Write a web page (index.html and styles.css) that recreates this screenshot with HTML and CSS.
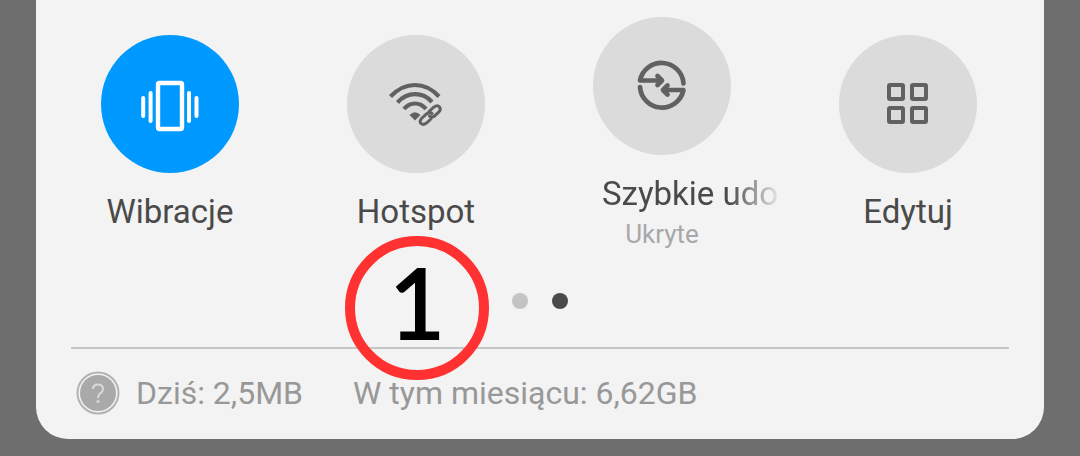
FILE: index.html
```html
<!DOCTYPE html>
<html lang="pl">
<head>
  <meta charset="UTF-8" />
  <meta name="viewport" content="width=device-width, initial-scale=1" />
  <title>Szybkie ustawienia</title>
  <link rel="stylesheet" href="styles.css">
</head>
<body>
  <main class="panel">
    <div class="tiles">
      <button type="button" class="tile active">
        <span class="circle">
          <svg width="64" height="64" viewBox="0 0 64 64" fill="none" stroke="currentColor" stroke-width="4" stroke-linecap="round">
            <rect x="20" y="11" width="24" height="46" rx="1.5" stroke-width="4.4" />
            <path d="M12.6 21v28M5.2 26v18M51 21v28M58.5 26v18" />
          </svg>
        </span>
        <span class="label">Wibracje</span>
      </button>

      <button type="button" class="tile">
        <span class="circle">
          <svg width="64" height="64" viewBox="0 0 64 64" fill="none" stroke="currentColor" stroke-width="4.2">
            <path d="M6.500 24.500Q17.500 13 31 13Q44.500 13 55 24.500M13.500 30.500Q21 22.200 31 22.200Q41 22.200 48 30M20 37Q24.500 31.500 31 31.500Q37.500 31.500 42 37" />
            <path d="M25.500 43Q31 37.500 36.500 43L31 48.500Z" fill="currentColor" stroke="none" />
            <g stroke-width="3" stroke-linecap="round">
              <path d="M45 39.500L50 35Q53.500 32.500 55.500 35Q57.500 37.500 54.500 40.500L50.500 44Q48 46 45.500 44" />
              <path d="M48 41.500Q45.500 39.500 42.500 42L37.500 46.500Q35 49.500 37 51.500Q39 53.500 42.500 51L47 47" />
            </g>
          </svg>
        </span>
        <span class="label">Hotspot</span>
      </button>

      <button type="button" class="tile">
        <span class="circle">
          <svg width="64" height="64" viewBox="0 0 64 64" fill="none" stroke="currentColor" stroke-width="4.700" stroke-linecap="round" stroke-linejoin="round">
            <path d="M53.500 29.500A22 22 0 0 0 10 26.500H31" />
            <path d="M10 33A22 22 0 0 0 53.500 36H34" />
            <path d="M27.500 22L32 26.500L27.500 31M37.500 31.500L33 36L37.500 40.500" fill="currentColor" />
          </svg>
        </span>
        <span class="label long">Szybkie udo</span>
        <span class="status">Ukryte</span>
      </button>

      <button type="button" class="tile">
        <span class="circle">
          <svg width="64" height="64" viewBox="0 0 64 64" fill="none" stroke="currentColor" stroke-width="4">
            <rect x="13" y="13" width="14" height="14" rx="1" />
            <rect x="36" y="13" width="14" height="14" rx="1" />
            <rect x="13" y="36" width="14" height="14" rx="1" />
            <rect x="36" y="36" width="14" height="14" rx="1" />
          </svg>
        </span>
        <span class="label">Edytuj</span>
      </button>
    </div>

    <div class="pager">
      <span class="dot"></span>
      <span class="dot current"></span>
      <span class="marker">1</span>
    </div>

    <div class="usage">
      <svg class="help" width="44" height="44" viewBox="0 0 44 44" fill="none">
        <circle cx="22" cy="22" r="20.500" stroke="#b3b3b3" stroke-width="2" />
        <circle cx="22" cy="22" r="18" fill="#a9a9a9" />
        <path d="M17 18Q17 13.500 22 13.500Q27 13.500 27 18Q27 20.500 24 22.500Q22 24 22 27" stroke="#d9d9d9" stroke-width="2" />
        <circle cx="22" cy="30.500" r="1.500" fill="#d9d9d9" />
      </svg>
      <span class="today">Dziś: 2,5MB</span>
      <span>W tym miesiącu: 6,62GB</span>
    </div>
  </main>
</body>
</html>
```

FILE: styles.css
```css
*, *::before, *::after { margin: 0; padding: 0; box-sizing: border-box; }

body {
  background: #6e6e6e;
  font-family: Roboto, "Liberation Sans", sans-serif;
  color: #4a4a4a;
}

.panel {
  margin: 0 36px;
  padding-top: 17px;
  background: #f3f3f3;
  border-radius: 0 0 32px 32px;
}

.tiles {
  display: flex;
  align-items: center;
  padding: 0 13px 0 11px;
}

.tile {
  flex: 1 1 0;
  min-width: 0;
  display: flex;
  flex-direction: column;
  align-items: center;
  border: none;
  background: none;
  font: inherit;
  color: inherit;
  cursor: pointer;
}

.circle {
  width: 138px;
  height: 138px;
  margin-bottom: 19px;
  border-radius: 50%;
  display: flex;
  justify-content: center;
  align-items: center;
  background: #dbdbdb;
  color: #5f6162;
}

.active .circle {
  background: #0099ff;
  color: #fff;
}

.label {
  white-space: nowrap;
  font-size: 33px;
  line-height: 40px;
}

/* names wider than the tile fade out on the right */
.label.long {
  width: 100%;
  padding-left: 63px;
  text-align: left;
  -webkit-mask-image: linear-gradient(to right, #000 190px, transparent 244px);
  mask-image: linear-gradient(to right, #000 190px, transparent 244px);
}

.status {
  margin-bottom: -4px;
  font-size: 26px;
  line-height: 40px;
  color: #a8a8a8;
}

.pager {
  position: relative;
  display: flex;
  justify-content: center;
  gap: 24px;
  margin: 0 35px;
  padding: 43px 0 38px;
  border-bottom: 2px solid #c6c6c6;
}

.dot {
  width: 16px;
  height: 16px;
  border-radius: 50%;
  background: #c4c4c4;
}

.dot.current {
  background: #4a4a4a;
}

/* numbered callout over the pager and the usage line */
.marker {
  position: absolute;
  top: -14px;
  left: calc(50% - 195px);
  width: 144px;
  height: 144px;
  border: 10px solid #ff3131;
  border-radius: 50%;
  font-family: Lato, "Open Sans", sans-serif;
  font-size: 96px;
  line-height: 112px;
  text-align: center;
  color: #000;
  -webkit-text-stroke: 2px #000;
}

.usage {
  display: flex;
  align-items: center;
  margin: 0 35px;
  padding: 22px 0 24px 5px;
  font-size: 32px;
  line-height: 44px;
  color: #989898;
}

.help {
  margin-right: 16px;
}

.today {
  margin-right: 50px;
}
```
